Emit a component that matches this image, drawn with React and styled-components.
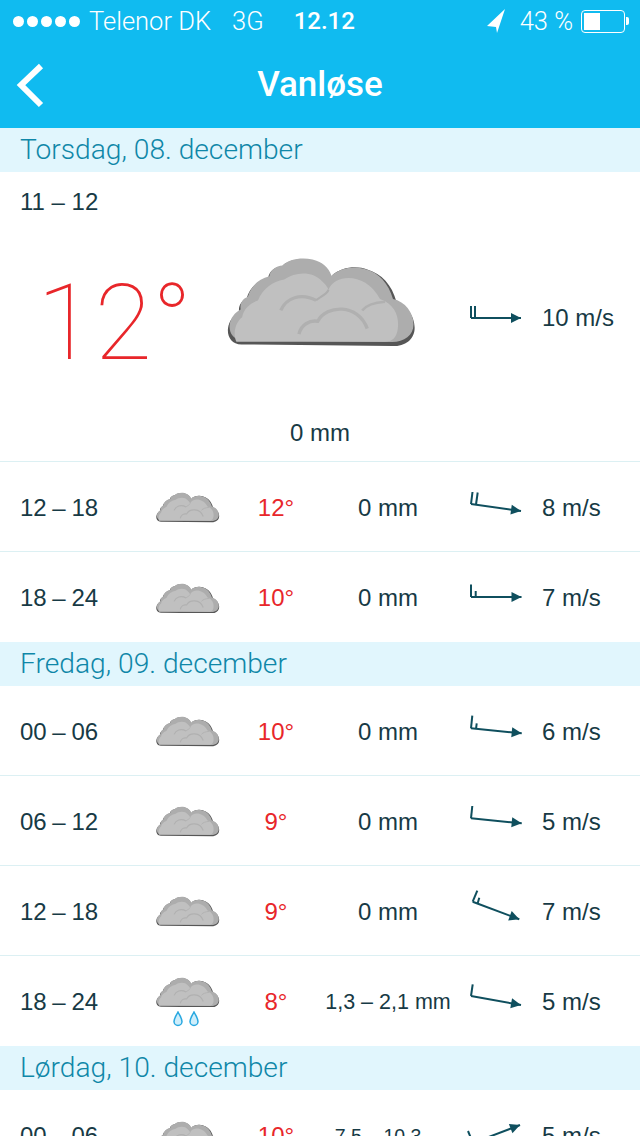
import React from 'react'
import styled, { createGlobalStyle } from 'styled-components'

const Global = createGlobalStyle`
    html, body {
        margin: 0;
        height: 1136px;
        overflow: hidden;
        background: #fff;
    }
`

const Page = styled.div`
    width: 640px;
    height: 1136px;
    overflow: hidden;
    font-family: "Liberation Sans", Arial, sans-serif;
    color: #173a45;
`

const Top = styled.header`
    background: #10bbf0;
    color: #fff;
    height: 128px;
`

const StatusBar = styled.div`
    height: 42px;
    display: flex;
    align-items: center;
    padding: 0 12px 0 13px;
    font-family: Roboto, sans-serif;
    font-weight: 300;
    font-size: 25.5px;
`

const Dots = styled.div`
    display: flex;
    gap: 3px;
    margin-right: 9px;
`

const Dot = styled.span`
    width: 11px;
    height: 11px;
    border-radius: 50%;
    background: #fff;
`

const Status = styled.span`
    margin-right: ${p => p.$gap || 0}px;
    font-weight: ${p => p.$bold ? 500 : 300};
    font-size: ${p => p.$bold ? 24 : 25.5}px;
`

const Right = styled.div`
    margin-left: auto;
    display: flex;
    align-items: center;
`

const Arrow = styled.svg`
    margin-right: 14px;
`

const Battery = styled.div`
    position: relative;
    width: 44px;
    height: 23px;
    box-sizing: border-box;
    margin: 0 3px 0 8px;
    border: 1.5px solid #fff;
    border-radius: 4px;
    padding: 2px;
    &:after {
        content: "";
        position: absolute;
        right: -5px;
        top: 6px;
        width: 3px;
        height: 8px;
        border-radius: 0 2px 2px 0;
        background: #fff;
    }
`

const BatteryFill = styled.div`
    width: 43%;
    height: 100%;
    background: #fff;
`

const NavBar = styled.div`
    position: relative;
    height: 85px;
    display: flex;
    align-items: center;
    justify-content: center;
`

const Back = styled.svg`
    position: absolute;
    left: 14px;
    top: 20px;
`

const Title = styled.h1`
    margin: 0;
    font-size: 35px;
    font-weight: 500;
    font-family: Roboto, sans-serif;
`

const DayHeader = styled.div`
    box-sizing: border-box;
    height: 44px;
    padding: 0 0 2px 20px;
    background: #e1f6fd;
    color: #0f87a8;
    display: flex;
    align-items: center;
    font-family: Roboto, sans-serif;
    font-weight: 300;
    font-size: 28.2px;
`

const Hero = styled.section`
    box-sizing: border-box;
    height: 290px;
    padding-top: 16px;
    border-bottom: 1px solid #dcf0f3;
    font-size: 24px;
`

const HeroLabel = styled.div`
    line-height: 28px;
    padding-left: 20px;
`

const HeroMain = styled.div`
    margin-top: 42px;
    height: 120px;
    display: grid;
    grid-template-columns: 37px 190px 238px 77px auto;
    grid-template-rows: 120px;
    align-items: center;
`

const HeroTemp = styled.div`
    grid-column: 2;
    margin-top: 11px;
    font-family: Roboto, sans-serif;
    font-weight: 100;
    font-size: 105px;
    color: #e8262a;
`

const HeroCloud = styled.div`
    display: flex;
    margin-bottom: 33px;
`

const HeroRain = styled.div`
    margin-top: 41px;
    line-height: 28px;
    text-align: center;
`

const Row = styled.div`
    box-sizing: border-box;
    height: 90px;
    padding: 2px 0 0 20px;
    display: grid;
    grid-template-columns: 120px 96px 80px 144px 5px 77px auto;
    align-items: center;
    font-size: 24px;
    border-bottom: ${p => p.$last ? 'none' : '1px solid #dcf0f3'};
`

const Time = styled.span`
    word-spacing: -1px;
`

const CloudCell = styled.div`
    display: flex;
    flex-direction: column;
    align-items: center;
    gap: 4px;
`

const Temp = styled.div`
    text-align: center;
    color: #e8262a;
`

const Rain = styled.div`
    text-align: center;
    white-space: nowrap;
    font-size: ${p => p.$size || 24}px;
    padding-right: ${p => p.$pad || 0}px;
`

const WindCell = styled.div`
    grid-column: 6;
    display: flex;
`

const CLOUD = 'M125 310C95 310 82 285 85 262C88 240 100 225 118 215C115 195 125 180 140 175C148 145 170 120 205 112C205 95 225 78 245 78C262 60 300 52 335 60C362 66 385 85 392 110C420 85 460 78 495 90C535 100 565 135 578 182C615 190 640 225 640 260C640 295 612 315 575 315Z'

// same outline is used at both sizes, only the width changes
const Cloud = ({ width }) => (
    <svg width={width} height={width * 272 / 565} viewBox="80 50 565 272">
        <path d={CLOUD} fill="#565656" transform="translate(-2 3)" />
        <path d="M392 108C420 83 465 78 497 90C540 103 570 135 584 186Z" fill="#565656" />
        <path d={CLOUD} fill="#adadad" transform="translate(4.300 3) scale(0.985 0.96)" />
        <path d="M108 305C98 285 102 250 125 232C130 205 150 190 172 182C185 150 215 125 250 120C285 95 335 95 362 124C372 134 378 140 382 150C400 105 490 95 535 178C580 195 592 230 588 265C585 292 572 305 550 305Z" fill="#c0c0c0" />
        <path d="M240 212C255 175 300 158 345 182" fill="none" stroke="#b0b0b0" strokeWidth="10" />
        <path d="M294 282C300 255 325 240 350 244C375 195 470 190 497 266" fill="none" stroke="#b0b0b0" strokeWidth="10" />
        <path d="M482 212C495 195 520 188 550 186" fill="none" stroke="#b0b0b0" strokeWidth="8" />
        <path d="M382 150C378 165 350 175 345 182" fill="none" stroke="#adadad" strokeWidth="6" />
    </svg>
)

const Drops = () => (
    <svg width="40" height="16" viewBox="0 0 40 16">
        <path d="M10 1C12 5 14 7.500 14 10.500A4 4 0 0 1 6 10.500C6 7.500 8 5 10 1Z" fill="#cfeefb" stroke="#29a8e0" strokeWidth="1.500" />
        <path d="M26 1C28 5 30 7.500 30 10.500A4 4 0 0 1 22 10.500C22 7.500 24 5 26 1Z" fill="#cfeefb" stroke="#29a8e0" strokeWidth="1.500" />
    </svg>
)

// base and tip of the shaft, then the barbs as line ends
const Wind = ({ base, tip, barbs }) => {
    const a = Math.atan2(tip[1] - base[1], tip[0] - base[0])
    const px = (d, s) => [tip[0] - d * Math.cos(a) - s * Math.sin(a), tip[1] - d * Math.sin(a) + s * Math.cos(a)].join(',')
    return (
        <svg width="60" height="48" viewBox="0 0 60 48">
            <g stroke="#0f4f5e" strokeWidth="2" fill="none">
                <line x1={base[0]} y1={base[1]} x2={tip[0]} y2={tip[1]} />
                {barbs.map((b, i) => <line key={i} x1={b[0]} y1={b[1]} x2={b[2]} y2={b[3]} />)}
            </g>
            <polygon points={`${tip[0]},${tip[1]} ${px(10, 5)} ${px(10, -5)}`} fill="#0f4f5e" />
        </svg>
    )
}

const DAYS = [
    {
        rows: [
            { time: '12 – 18', temp: '12°', rain: '0 mm', speed: '8 m/s', wind: { base: [6, 20], tip: [56, 27], barbs: [[6, 20, 7.500, 8], [11, 20.500, 12.700, 8.500]] } },
            { time: '18 – 24', temp: '10°', rain: '0 mm', speed: '7 m/s', wind: { base: [6, 23], tip: [56.500, 23], barbs: [[6, 23, 6, 10.500], [10.700, 23, 10.700, 17]] } },
        ],
    },
    {
        name: 'Fredag, 09. december',
        rows: [
            { time: '00 – 06', temp: '10°', rain: '0 mm', speed: '6 m/s', wind: { base: [6, 20.300], tip: [56.700, 25.300], barbs: [[6, 20.300, 7.300, 7.700], [11, 21, 11.700, 15.300]] } },
            { time: '06 – 12', temp: '9°', rain: '0 mm', speed: '5 m/s', wind: { base: [6, 20.300], tip: [56.700, 25.300], barbs: [[6, 20.300, 7.300, 8]] } },
            { time: '12 – 18', temp: '9°', rain: '0 mm', speed: '7 m/s', wind: { base: [7.700, 13.700], tip: [54.300, 31.300], barbs: [[7.700, 13.700, 12.300, 2.700], [12.500, 15.700, 14.300, 9.700]] } },
            { time: '18 – 24', temp: '8°', rain: '1,3 – 2,1 mm', rainSize: 21.500, drops: true, speed: '5 m/s', wind: { base: [6, 18], tip: [56, 27], barbs: [[6, 18, 7.700, 6.300]] } },
        ],
    },
    {
        name: 'Lørdag, 10. december',
        rows: [
            { time: '00 – 06', temp: '10°', rain: '7,5 – 10,3', rainSize: 19.500, rainPad: 20, speed: '5 m/s', wind: { base: [8, 31], tip: [55, 13], barbs: [[8, 31, 3, 19]] } },
        ],
    },
]

const App = () => (
    <Page>
        <Global />
        <Top>
            <StatusBar>
                <Dots>{[0, 1, 2, 3, 4].map(i => <Dot key={i} />)}</Dots>
                <Status $gap={21}>Telenor DK</Status>
                <Status $gap={30}>3G</Status>
                <Status $bold>12.12</Status>
                <Right>
                    <Arrow width="19" height="24" viewBox="0 0 19 24">
                        <polygon points="18,0 0,17 9,18 10,24" fill="#fff" />
                    </Arrow>
                    <Status>43 %</Status>
                    <Battery><BatteryFill /></Battery>
                </Right>
            </StatusBar>
            <NavBar>
                <Back width="32" height="46" viewBox="0 0 32 46">
                    <polyline points="27,4 7,23 27,43" fill="none" stroke="#fff" strokeWidth="6" />
                </Back>
                <Title>Vanløse</Title>
            </NavBar>
        </Top>
        <DayHeader>Torsdag, 08. december</DayHeader>
        <Hero>
            <HeroLabel>11 – 12</HeroLabel>
            <HeroMain>
                <HeroTemp>12°</HeroTemp>
                <HeroCloud><Cloud width={190} /></HeroCloud>
                <Wind base={[6, 24]} tip={[56, 24]} barbs={[[6, 24, 6, 12], [10, 24, 10, 12]]} />
                <span>10 m/s</span>
            </HeroMain>
            <HeroRain>0 mm</HeroRain>
        </Hero>
        {DAYS.map((day, d) => (
            <React.Fragment key={d}>
                {day.name && <DayHeader>{day.name}</DayHeader>}
                {day.rows.map((r, i) => (
                    <Row key={i} $last={i === day.rows.length - 1}>
                        <Time>{r.time}</Time>
                        <CloudCell>
                            <Cloud width={64} />
                            {r.drops && <Drops />}
                        </CloudCell>
                        <Temp>{r.temp}</Temp>
                        <Rain $size={r.rainSize} $pad={r.rainPad}>{r.rain}</Rain>
                        <WindCell><Wind {...r.wind} /></WindCell>
                        <span>{r.speed}</span>
                    </Row>
                ))}
            </React.Fragment>
        ))}
    </Page>
)

export default App
